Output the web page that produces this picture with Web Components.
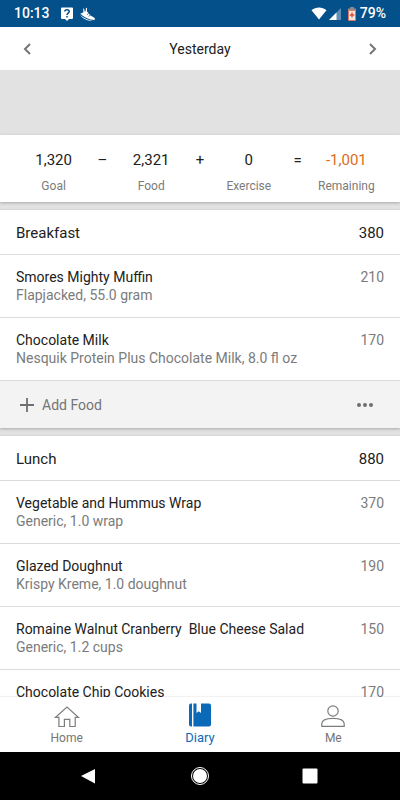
<!DOCTYPE html>
<html lang="en">
<head>
<meta charset="utf-8">
<meta name="viewport" content="width=device-width, initial-scale=1">
<title>Diary</title>
<style>
  html, body { margin: 0; height: 100%; }
  body { font-family: Roboto, "Liberation Sans", sans-serif; color: #212121; background: #e2e2e2; }
</style>
</head>
<body>
<diary-app>
  <status-bar slot="top" time="10:13" battery="79%"></status-bar>
  <date-bar slot="top">Yesterday</date-bar>
  <ad-space></ad-space>
  <calorie-summary>
    <calorie-figure label="Goal">1,320</calorie-figure>
    <span>–</span>
    <calorie-figure label="Food">2,321</calorie-figure>
    <span>+</span>
    <calorie-figure label="Exercise">0</calorie-figure>
    <span>=</span>
    <calorie-figure label="Remaining" over>-1,001</calorie-figure>
  </calorie-summary>
  <meal-card name="Breakfast" total="380">
    <food-row calories="210">Smores Mighty Muffin<span slot="detail">Flapjacked, 55.0 gram</span></food-row>
    <food-row calories="170">Chocolate Milk<span slot="detail">Nesquik Protein Plus Chocolate Milk, 8.0 fl oz</span></food-row>
    <add-food></add-food>
  </meal-card>
  <meal-card name="Lunch" total="880">
    <food-row calories="370">Vegetable and Hummus Wrap<span slot="detail">Generic, 1.0 wrap</span></food-row>
    <food-row calories="190">Glazed Doughnut<span slot="detail">Krispy Kreme, 1.0 doughnut</span></food-row>
    <food-row calories="150">Romaine Walnut Cranberry&nbsp; Blue Cheese Salad<span slot="detail">Generic, 1.2 cups</span></food-row>
    <food-row calories="170">Chocolate Chip Cookies</food-row>
  </meal-card>
  <tab-bar slot="bottom">
    <tab-item href="#home">
      <svg slot="icon" width="26" height="24" viewBox="0 0 26 24" fill="none" stroke="#7d7d7d" stroke-width="1.2"><path d="M1.6 14.300 13 4l11.400 10.300h-3.200v9.300h-5.400v-7.200h-5.400v7.200H4.900v-9.300z"/></svg>Home</tab-item>
    <tab-item href="#diary" active>
      <svg slot="icon" width="26" height="24" viewBox="0 0 26 24"><path fill="#0b6ab8" d="M4 .5h1v23H4a2 2 0 0 1-2-2v-19a2 2 0 0 1 2-2zM6.400 .5H9.500v9.500l2.250-1.800L14 10V.5h8a2 2 0 0 1 2 2v19a2 2 0 0 1-2 2H6.400z"/></svg>Diary</tab-item>
    <tab-item href="#me">
      <svg slot="icon" width="26" height="24" viewBox="0 0 26 24" fill="none" stroke="#7d7d7d" stroke-width="1.200"><circle cx="13" cy="8" r="5.200"/><path d="M1.800 23.300v-2.500c0-3.400 4.600-5.400 11.200-5.400s11.200 2 11.200 5.400v2.500z"/></svg>Me</tab-item>
  </tab-bar>
  <system-nav slot="bottom"></system-nav>
</diary-app>

<script>
const define = (name, html, setup) => {
  const template = document.createElement('template');
  template.innerHTML = html;
  customElements.define(name, class extends HTMLElement {
    constructor() {
      super();
      this.attachShadow({ mode: 'open' }).append(template.content.cloneNode(true));
    }
    connectedCallback() {
      if (setup) setup(this, this.shadowRoot);
    }
  });
};

define('diary-app', `
<style>
  :host { display: flex; flex-direction: column; height: 100vh; }
  main { flex: 1; min-height: 0; overflow: hidden; display: flex; flex-direction: column; gap: 8px; }
  main ::slotted(*) { flex: none; }
</style>
<slot name="top"></slot><main><slot></slot></main><slot name="bottom"></slot>`);

define('status-bar', `
<style>
  :host { display: flex; align-items: center; height: 27px; padding: 0 14px; background: #04508a; color: #fff; font-size: 14px; font-weight: 500; line-height: 27px; }
  .notes { margin-left: 11px; display: flex; gap: 7px; align-items: center; }
  .state { margin-left: auto; display: flex; align-items: center; }
  svg { display: block; }
  .signal { margin-left: 2px; } .battery { margin: 0 4px 0 7px; }
</style>
<span id="time"></span>
<div class="notes">
  <svg width="12" height="14" viewBox="0 0 12 14"><path fill="#fff" d="M1 .5h10a1 1 0 0 1 1 1V11a1 1 0 0 1-1 1H8l-2 2-2-2H1a1 1 0 0 1-1-1V1.500a1 1 0 0 1 1-1z"/><path d="M3.800 4.600C3.800 2 8.200 2 8.200 4.500 8.200 6.200 6 6 6 8M6 9v1.500" fill="none" stroke="#04508a" stroke-width="1.500"/></svg>
  <svg width="16" height="14" viewBox="0 0 16 14"><path fill="#fff" d="M3.200 1.500 4.200 1.800 4.600 4.600 5.600 4.200 6 .8 7 1 7 4.500 10.500 8.600 14 10.500C15.300 11.400 15.200 12.400 14.300 12.900L10.500 12.600C6.800 11.600 3 9.200.3 6.800L3.400 5.200z"/><path fill="#fff" d="M0 8C3.500 11 7.500 13.300 13 13.800H9.500C5.500 13 2 10.800 0 8z"/><path d="M7 7.700l1.700-1.200M8.600 9.300l1.700-1.200" stroke="#04508a" stroke-width=".7"/></svg>
</div>
<div class="state">
  <svg width="16" height="13" viewBox="0 0 16 13"><path fill="#fff" d="M.5 3.200C5-.5 11-.5 15.500 3.200L8 12.500z"/></svg>
  <svg class="signal" width="12" height="12" viewBox="0 0 12 12"><path fill="#5f8fb4" d="M12 0v12H0z"/><path fill="#fff" d="M7.500 4.500V12H0z"/></svg>
  <svg class="battery" width="8" height="14" viewBox="0 0 8 14"><path fill="#8d8e90" d="M2.200 0h3.600v1.500H8V4H0V1.500h2.200z"/><path fill="#f8e8e2" stroke="#de7760" d="M.5 3.500h7v10h-7z"/><path stroke="#d95333" stroke-width="1.400" d="M4 5.500v5M1.700 8h4.600"/></svg>
  <span id="level"></span>
</div>`, (el, root) => {
  root.getElementById('time').textContent = el.getAttribute('time');
  root.getElementById('level').textContent = el.getAttribute('battery');
});

define('date-bar', `
<style>
  :host { display: flex; align-items: center; justify-content: space-between; height: 43px; padding: 0 16px; background: #fff; }
  button { display: grid; place-items: center; width: 22px; height: 32px; padding: 0; border: 0; background: none; }
  h1 { margin: 0; font-size: 14px; font-weight: 400; line-height: 20px; }
  svg { fill: none; stroke: #757575; stroke-width: 2; }
</style>
<button aria-label="Previous day"><svg width="8" height="12" viewBox="0 0 8 12"><path d="M7 1 2 6l5 5"/></svg></button>
<h1><slot></slot></h1>
<button aria-label="Next day"><svg width="8" height="12" viewBox="0 0 8 12"><path d="M1 1l5 5-5 5"/></svg></button>`);

define('ad-space', `<style>:host { display: block; height: 65px; margin-bottom: -8px; background: #e2e2e2; }</style>`);

define('calorie-summary', `
<style>
  :host { display: grid; grid-template-columns: repeat(3, minmax(0, 3fr) minmax(0, 1fr)) minmax(0, 3fr); padding: 13px 17px 2px; background: #fff; box-shadow: 0 1px 3px #00000040; text-align: center; font-size: 15px; line-height: 24px; }
</style>
<slot></slot>`);

define('calorie-figure', `
<style>
  :host { display: flex; flex-direction: column; }
  :host([over]) strong { color: #dd6b20; }
  strong { font-weight: 400; }
  small { font-size: 12px; line-height: 28px; color: #7b7b7b; }
</style>
<strong><slot></slot></strong><small></small>`, (el, root) => {
  root.querySelector('small').textContent = el.getAttribute('label');
});

define('meal-card', `
<style>
  :host { display: block; background: #fff; box-shadow: 0 1px 3px #00000040; }
  header { display: flex; justify-content: space-between; padding: 2px 16px 0; font-size: 15px; line-height: 42px; }
  h2 { margin: 0; font: inherit; }
</style>
<header><h2></h2><span></span></header><slot></slot>`, (el, root) => {
  root.querySelector('h2').textContent = el.getAttribute('name');
  root.querySelector('span').textContent = el.getAttribute('total');
});

define('food-row', `
<style>
  :host { display: flex; justify-content: space-between; gap: 16px; padding: 13px 16px; border-top: 1px solid #dcdcdc; font-size: 14px; line-height: 18px; }
  .text { display: flex; flex-direction: column; }
  .detail, .calories { color: #7b7b7b; }
</style>
<div class="text"><span><slot></slot></span><span class="detail"><slot name="detail"></slot></span></div>
<span class="calories"></span>`, (el, root) => {
  root.querySelector('.calories').textContent = el.getAttribute('calories');
});

define('add-food', `
<style>
  :host { display: flex; justify-content: space-between; border-top: 1px solid #dcdcdc; background: #f3f3f3; padding: 0 16px; height: 47px; }
  button { display: flex; align-items: center; gap: 8px; padding: 0 4px; border: 0; background: none; font: 14px/20px Roboto, "Liberation Sans", sans-serif; color: #757575; }
  .more { padding: 0 11px; }
</style>
<button><svg width="14" height="14" viewBox="0 0 14 14" stroke="#707070" stroke-width="1.800"><path d="M7 0v14M0 7h14"/></svg>Add Food</button>
<button class="more" aria-label="More"><svg width="16" height="4" viewBox="0 0 16 4" fill="#707070"><circle cx="2" cy="2" r="2"/><circle cx="8" cy="2" r="2"/><circle cx="14" cy="2" r="2"/></svg></button>`);

define('tab-bar', `
<style>
  :host { display: block; background: #fff; box-shadow: 0 -1px 1px #0000000d; position: relative; }
  nav { display: grid; grid-template-columns: repeat(3, 1fr); height: 55px; }
</style>
<nav aria-label="Main"><slot></slot></nav>`);

define('tab-item', `
<style>
  :host { display: block; color: #757575; }
  :host([active]) { color: #0b6ab8; }
  a { display: flex; flex-direction: column; align-items: center; gap: 4px; padding-top: 6px; color: inherit; text-decoration: none; font-size: 12px; line-height: 14px; }
  :host([active]) a { font-size: 13px; }
</style>
<a><slot name="icon"></slot><span><slot></slot></span></a>`, (el, root) => {
  const link = root.querySelector('a');
  link.href = el.getAttribute('href');
  if (el.hasAttribute('active')) link.setAttribute('aria-current', 'page');
});

define('system-nav', `
<style>
  :host { display: flex; justify-content: center; gap: 88px; align-items: center; height: 48px; background: #000; position: relative; }
  button { display: grid; place-items: center; width: 22px; height: 32px; padding: 0; border: 0; background: none; }
</style>
<button aria-label="Back"><svg width="20" height="16" viewBox="0 0 20 16"><path fill="#fff" d="M15 1v14.500L1 8z"/></svg></button>
<button aria-label="Home"><svg width="20" height="20" viewBox="0 0 20 20"><circle cx="10" cy="10" r="8.500" fill="none" stroke="#fff"/><circle cx="10" cy="10" r="7" fill="#fff"/></svg></button>
<button aria-label="Recent apps"><svg width="16" height="16" viewBox="0 0 16 16"><rect x=".5" y=".5" width="15" height="15" rx="1" fill="#fff"/></svg></button>`);
</script>
</body>
</html>
